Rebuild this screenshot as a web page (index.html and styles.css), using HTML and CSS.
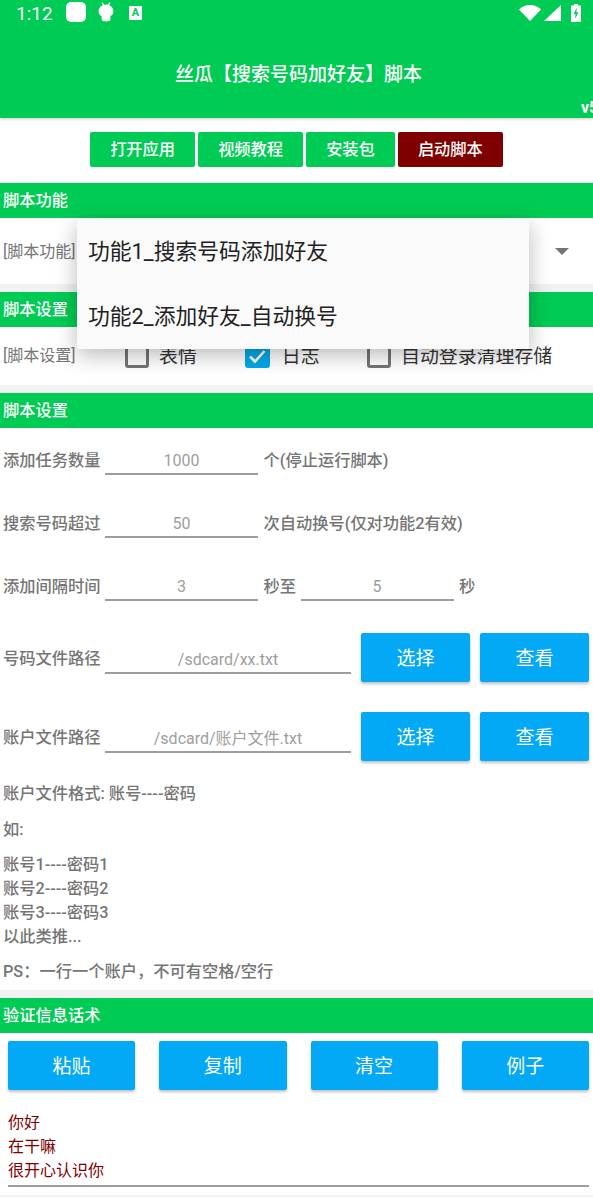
FILE: index.html
```html
<!DOCTYPE html>
<html lang="zh-CN">

<head>
    <meta charset="UTF-8" />
    <meta name="viewport" content="width=device-width, initial-scale=1.0" />
    <title>丝瓜脚本</title>
    <link rel="stylesheet" href="styles.css">
</head>

<body>
    <header class="app-header">
        <div class="status-bar">
            <span class="status-time">1:12</span>
            <span class="status-square"></span>
            <svg class="status-android" viewBox="0 0 16 20" width="16" height="20">
                <path d="M4 0.5 L5.8 3.4 M12 0.5 L10.2 3.4" stroke="#fff" stroke-width="1.2" fill="none" />
                <path d="M8 2.6 C3.6 2.6 0.6 5.6 0.6 9.6 C0.6 12.4 2 13.6 3.6 14 L3.6 17.2 C3.6 18.6 5 19.4 8 19.4 C11 19.4 12.4 18.6 12.4 17.2 L12.4 14 C14 13.6 15.4 12.4 15.4 9.6 C15.4 5.6 12.4 2.6 8 2.6 Z" fill="#fff" />
            </svg>
            <span class="status-app">A</span>
            <span class="status-right">
                <svg viewBox="0 0 22 16" width="22" height="16">
                    <path d="M0 4.4 C6 -1.4 16 -1.4 22 4.4 L11 16 Z" fill="#fff" />
                </svg>
                <svg viewBox="0 0 17 16" width="17" height="16">
                    <path d="M17 0 L17 16 L0 16 Z" fill="#fff" />
                </svg>
                <svg class="status-battery" viewBox="0 0 10 18" width="10" height="18">
                    <path d="M3 0 H7 V1.5 H10 V18 H0 V1.5 H3 Z" fill="#fff" />
                    <path d="M5.8 3.6 L2.6 10 H4.6 L4 15 L7.4 8.2 H5.3 Z" fill="#00cb54" />
                </svg>
            </span>
        </div>
        <h1 class="app-title">丝瓜【搜索号码加好友】脚本</h1>
        <div class="app-version">v5</div>
    </header>

    <div class="toolbar">
        <button class="tool-btn">打开应用</button>
        <button class="tool-btn">视频教程</button>
        <button class="tool-btn">安装包</button>
        <button class="tool-btn tool-btn-run">启动脚本</button>
    </div>

    <section class="card card-function">
        <h2 class="card-title">脚本功能</h2>
        <div class="function-body">
            <span class="small-label">[脚本功能]</span>
            <span class="spinner-arrow"></span>
        </div>
        <ul class="dropdown">
            <li>功能1_搜索号码添加好友</li>
            <li>功能2_添加好友_自动换号</li>
        </ul>
    </section>

    <section class="card">
        <h2 class="card-title">脚本设置</h2>
        <div class="check-body">
            <span class="small-label">[脚本设置]</span>
            <label class="check check-a"><span class="check-box"></span><span class="check-text">表情</span></label>
            <label class="check check-b">
                <span class="check-box check-box-on">
                    <svg viewBox="0 0 24 24" width="24" height="24">
                        <path d="M5 12.5 L10 17.5 L19.5 7" stroke="#fff" stroke-width="2.6" fill="none" />
                    </svg>
                </span><span class="check-text">日志</span>
            </label>
            <label class="check check-c"><span class="check-box"></span><span class="check-text">自动登录清理存储</span></label>
        </div>
    </section>

    <section class="card">
        <h2 class="card-title">脚本设置</h2>
        <div class="settings-body">
            <div class="row">
                <span class="row-label">添加任务数量</span>
                <div class="field">1000</div>
                <span class="row-label">个(停止运行脚本)</span>
            </div>
            <div class="row">
                <span class="row-label">搜索号码超过</span>
                <div class="field">50</div>
                <span class="row-label">次自动换号(仅对功能2有效)</span>
            </div>
            <div class="row row-last">
                <span class="row-label">添加间隔时间</span>
                <div class="field">3</div>
                <span class="row-label">秒至</span>
                <div class="field">5</div>
                <span class="row-label">秒</span>
            </div>
            <div class="row row-file">
                <span class="row-label">号码文件路径</span>
                <div class="field field-wide">/sdcard/xx.txt</div>
                <button class="blue-btn">选择</button>
                <button class="blue-btn">查看</button>
            </div>
            <div class="row row-file">
                <span class="row-label">账户文件路径</span>
                <div class="field field-wide">/sdcard/账户文件.txt</div>
                <button class="blue-btn">选择</button>
                <button class="blue-btn">查看</button>
            </div>
            <div class="help">
                <p class="help-first">账户文件格式: 账号----密码</p>
                <p>如:</p>
                <p>账号1----密码1<br>账号2----密码2<br>账号3----密码3<br>以此类推...</p>
                <p>PS：一行一个账户，不可有空格/空行</p>
            </div>
        </div>
    </section>

    <section class="card">
        <h2 class="card-title">验证信息话术</h2>
        <div class="verify-body">
            <div class="verify-btns">
                <button class="blue-btn">粘贴</button>
                <button class="blue-btn">复制</button>
                <button class="blue-btn">清空</button>
                <button class="blue-btn">例子</button>
            </div>
            <div class="verify-text">你好<br>在干嘛<br>很开心认识你</div>
        </div>
    </section>
</body>

</html>
```

FILE: styles.css
```css
* {
    box-sizing: border-box;
}

html,
body {
    height: 1197px;
    overflow: hidden;
}

body {
    font-family: Roboto, "Noto Sans CJK SC", sans-serif;
    background-color: #f2f2f2;
    margin: 0;
    font-size: 16.25px;
    color: #757575;
}

button {
    font-family: inherit;
    border: none;
    padding: 0;
    color: #fff;
    cursor: pointer;
}

/* Header */
.app-header {
    position: relative;
    z-index: 1;
    height: 118px;
    background: #00cb54;
    color: #fff;
    box-shadow: 0 1px 3px rgba(0, 0, 0, 0.2);
    overflow: hidden;
}

.status-bar {
    display: flex;
    align-items: center;
    height: 26px;
    padding-left: 16px;
}

.status-time {
    font-size: 19px;
    width: 50px;
}

.status-square {
    width: 20px;
    height: 20px;
    background: #fff;
    border-radius: 5px;
    margin-top: -2px;
}

.status-android {
    margin: -2px 0 0 12px;
}

.status-app {
    width: 13px;
    height: 14px;
    margin-left: 15px;
    background: #fff;
    color: #00cb54;
    font-size: 11px;
    font-weight: 700;
    line-height: 13px;
    text-align: center;
    border-radius: 1px;
}

.status-right {
    display: flex;
    align-items: center;
    gap: 3px;
    margin-left: auto;
    margin-right: 12px;
}

.status-battery {
    margin-left: 7px;
}

.app-title {
    margin: 35px 0 0;
    padding-left: 4px;
    font-size: 19px;
    line-height: 28px;
    font-weight: 500;
    text-align: center;
}

.app-version {
    margin: 10px 0 0 581px;
    font-size: 16px;
    line-height: 18px;
    font-weight: 700;
    white-space: nowrap;
}

/* Toolbar */
.toolbar {
    display: flex;
    justify-content: center;
    gap: 3px;
    height: 63px;
    padding-top: 14px;
    background: #fff;
}

.tool-btn {
    height: 35px;
    padding: 0 20px 3px;
    font-size: 16.25px;
    font-weight: 500;
    background: #00cb54;
    border-radius: 2px;
}

.tool-btn-run {
    background: #7f0000;
}

/* Cards */
.card {
    margin-top: 8px;
    background: #fff;
}

.card-function {
    position: relative;
    margin-top: 2px;
}

.card-title {
    margin: 0;
    height: 35px;
    padding-left: 3px;
    background: #00cb54;
    color: #fff;
    font-size: 16.25px;
    font-weight: 500;
    line-height: 36px;
}

.small-label {
    padding-bottom: 3px;
    font-size: 16px;
}

.function-body {
    display: flex;
    align-items: center;
    justify-content: space-between;
    height: 66px;
    padding: 0 24px 0 3px;
}

.spinner-arrow {
    border-left: 7px solid transparent;
    border-right: 7px solid transparent;
    border-top: 7px solid #757575;
}

.dropdown {
    position: absolute;
    z-index: 2;
    top: 36px;
    left: 77px;
    width: 452px;
    height: 130px;
    margin: 0;
    padding: 0;
    list-style: none;
    background: #fafafa;
    color: #212121;
    font-size: 21.8px;
    border-radius: 2px;
    box-shadow: 0 6px 22px rgba(0, 0, 0, 0.28);
}

.dropdown li {
    height: 65px;
    padding-left: 11px;
    line-height: 65px;
}

/* Checkboxes */
.check-body {
    display: flex;
    align-items: center;
    height: 58px;
    padding: 0 0 1px 3px;
}

.check {
    display: flex;
    align-items: center;
    color: #333;
    font-size: 18.9px;
}

.check-text {
    padding-bottom: 3px;
}

.check-a {
    margin-left: 49px;
}

.check-b {
    margin-left: 48px;
}

.check-c {
    margin-left: 47px;
}

.check-box {
    width: 24px;
    height: 24px;
    margin-right: 10.5px;
    border: 3px solid #757575;
    border-radius: 3px;
}

.check-box-on {
    width: 25px;
    margin-right: 12px;
    border: none;
    background: #03a9e8;
}

.check-box-on svg {
    display: block;
}

/* Settings form */
.settings-body {
    height: 562px;
    padding: 7px 3px 0 3px;
}

.row {
    display: flex;
    align-items: center;
    height: 40px;
    margin-bottom: 23px;
}

.row-last {
    margin-bottom: 32px;
}

.row-file {
    height: 49px;
    margin-bottom: 30px;
}

.row-label {
    padding-top: 8px;
    font-weight: 500;
    white-space: nowrap;
}

.row-file .row-label {
    padding-top: 0;
    padding-bottom: 2px;
}

.field {
    width: 153px;
    height: 40px;
    margin: 0 5.5px 0 4.5px;
    padding-top: 13px;
    border-bottom: 2px solid #9e9e9e;
    color: #9e9e9e;
    font-size: 16px;
    line-height: 25px;
    text-align: center;
}

.field-wide {
    align-self: flex-start;
    width: 246px;
    margin: 1px 10px 0 4.5px;
}

.blue-btn {
    width: 109px;
    height: 49px;
    padding-bottom: 2px;
    font-size: 19px;
    background: #03a9f4;
    border-radius: 2px;
    box-shadow: 0 2px 3px rgba(0, 0, 0, 0.25);
}

.row-file .blue-btn + .blue-btn {
    margin-left: 10px;
}

.help {
    margin-top: -9px;
    font-weight: 500;
    line-height: 24px;
}

.help p {
    margin: 0 0 11px;
}

.help .help-first {
    margin-bottom: 12px;
}

/* Verify text */
.verify-body {
    height: 162px;
    padding: 8px 4px 0 8px;
}

.verify-btns {
    display: flex;
    gap: 24px;
}

.verify-btns .blue-btn {
    flex: 1;
}

.verify-text {
    margin-top: 21px;
    padding-bottom: 2px;
    border-bottom: 2px solid #9e9e9e;
    color: #800000;
    font-size: 16px;
    line-height: 24px;
}
```
